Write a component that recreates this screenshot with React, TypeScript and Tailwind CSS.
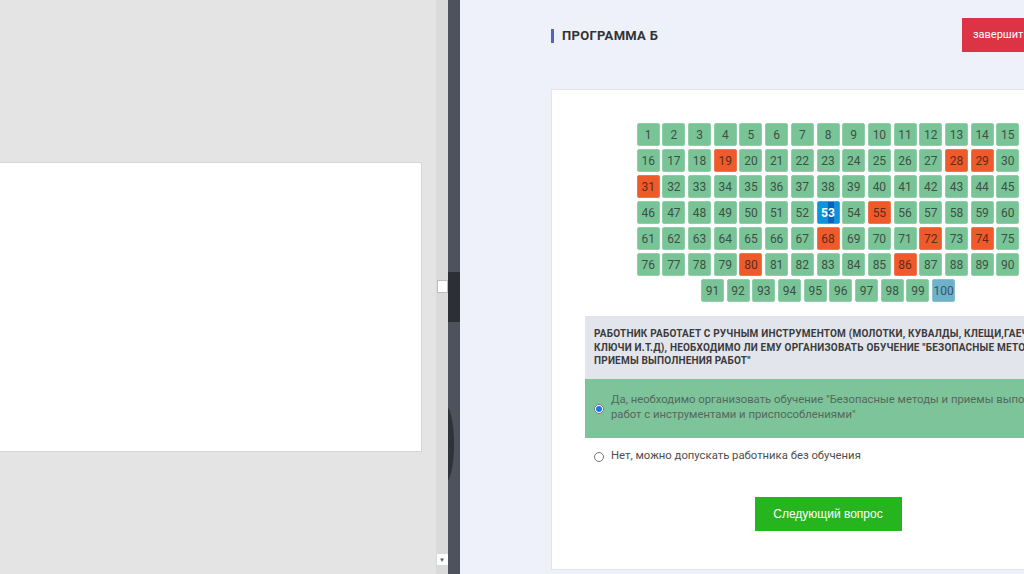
import React from 'react';

const wrong = [19, 28, 29, 31, 55, 68, 72, 74, 80, 86];

function Cell({ n }: { n: number }) {
  if (n === 53) {
    return (
      <div className="relative w-[23px] h-[23px] rounded-[2px] bg-[#0b93e0] border border-[#3aa6e6] flex items-center justify-center overflow-hidden">
        <div className="absolute left-[10px] top-0 bottom-0 w-[6px] bg-[#0a5fb8]" />
        <span className="relative text-[12px] font-bold text-white">53</span>
      </div>
    );
  }
  let cls = 'bg-[#79c497] border-[#8fcfa8] text-[#3f4f45]';
  if (wrong.includes(n)) cls = 'bg-[#ef5a2a] border-[#f27449] text-[#5b2c1d]';
  if (n === 100) cls = 'bg-[#6eb1c9] border-[#86bfd3] text-[#3d5560]';
  return (
    <div className={`w-[23px] h-[23px] rounded-[2px] border flex items-center justify-center text-[12px] ${cls}`}>
      {n}
    </div>
  );
}

function Radio({ checked }: { checked?: boolean }) {
  return (
    <div className="w-[10px] h-[10px] shrink-0 rounded-full border border-[#767676] bg-white flex items-center justify-center">
      {checked && <div className="w-[6px] h-[6px] rounded-full bg-[#1a73e8]" />}
    </div>
  );
}

export default function App() {
  const rows = [0, 1, 2, 3, 4, 5].map((r) => Array.from({ length: 15 }, (_, i) => r * 15 + i + 1));
  const last = Array.from({ length: 10 }, (_, i) => 91 + i);

  return (
    <div className="w-[1024px] h-[574px] flex overflow-hidden font-['Roboto',sans-serif]">
      {/* left viewer */}
      <div className="w-[436px] shrink-0 bg-[#e4e4e4] pt-[162px]">
        <div className="w-[422px] h-[290px] bg-white border border-[#d6d6d6] border-l-0" />
      </div>
      <div className="w-[12px] shrink-0 bg-[#dadada] flex flex-col items-center">
        <div className="mt-[280px] w-[11px] h-[13px] bg-white border border-[#bdbdbd]" />
        <div className="mt-auto mb-[9px] w-[11px] h-[11px] bg-white flex items-center justify-center text-[6px] text-[#555]">▼</div>
      </div>
      <div className="relative w-[12px] shrink-0 bg-[#4d525c] overflow-hidden">
        <div className="absolute left-0 right-0 top-[272px] h-[50px] bg-[#2c2f35]" />
        <div className="absolute left-[-12px] top-[405px] w-[18px] h-[78px] rounded-[50%] bg-[#2f3238]" />
      </div>

      {/* right app */}
      <div className="flex-1 bg-[#eef1f9] pl-[91px] pt-[18px] overflow-hidden">
        <div className="flex items-center h-[34px] whitespace-nowrap">
          <div className="w-[3px] h-[14px] shrink-0 bg-[#4f63c9] mt-[2px]" />
          <div className="ml-[8px] mt-[2px] w-[400px] shrink-0 text-[13px] font-bold text-[#333] tracking-[0.3px]">ПРОГРАММА Б</div>
          <div className="h-[34px] shrink-0 bg-[#dc3444] text-white text-[11px] flex items-center pl-[11px] pr-[12px]">
            завершить тест
          </div>
        </div>

        <div className="mt-[37px] w-[554px] h-[481px] bg-white border border-[#e2e5ee] flex flex-col items-center pt-[33px]">
          <div className="flex flex-col gap-[3px]">
            {rows.map((row, i) => (
              <div key={i} className="flex gap-[2.7px]">
                {row.map((n) => (
                  <Cell key={n} n={n} />
                ))}
              </div>
            ))}
            <div className="flex gap-[2.7px] justify-center">
              {last.map((n) => (
                <Cell key={n} n={n} />
              ))}
            </div>
          </div>

          <div className="self-stretch mx-[33px] mt-[14px]">
            <div className="bg-[#e3e5ec] h-[63px] pl-[9px] pt-[11px] text-[10px] font-bold tracking-[0.2px] leading-[13.5px] text-[#3b3b3b] whitespace-nowrap">
              <div>РАБОТНИК РАБОТАЕТ С РУЧНЫМ ИНСТРУМЕНТОМ (МОЛОТКИ, КУВАЛДЫ, КЛЕЩИ,ГАЕЧНЫЕ</div>
              <div>КЛЮЧИ И.Т.Д), НЕОБХОДИМО ЛИ ЕМУ ОРГАНИЗОВАТЬ ОБУЧЕНИЕ "БЕЗОПАСНЫЕ МЕТОДЫ И</div>
              <div>ПРИЕМЫ ВЫПОЛНЕНИЯ РАБОТ"</div>
            </div>
            <div className="bg-[#7dc49b] h-[59px] flex items-center pl-[9px] gap-[7px]">
              <Radio checked />
              <div className="-mt-[3px] text-[11.3px] leading-[15px] text-[#56675c] whitespace-nowrap">
                <div>Да, необходимо организовать обучение "Безопасные методы и приемы выполнения</div>
                <div>работ с инструментами и приспособлениями"</div>
              </div>
            </div>
            <div className="h-[38px] flex items-center pl-[9px] gap-[7px]">
              <Radio />
              <div className="-mt-[2px] text-[11.3px] text-[#4e4e4e] whitespace-nowrap">Нет, можно допускать работника без обучения</div>
            </div>
          </div>

          <button className="mt-[21px] w-[147px] h-[34px] bg-[#26b51e] text-white text-[12px] font-['Liberation_Sans',sans-serif]">
            Следующий вопрос
          </button>
        </div>
      </div>
    </div>
  );
}
